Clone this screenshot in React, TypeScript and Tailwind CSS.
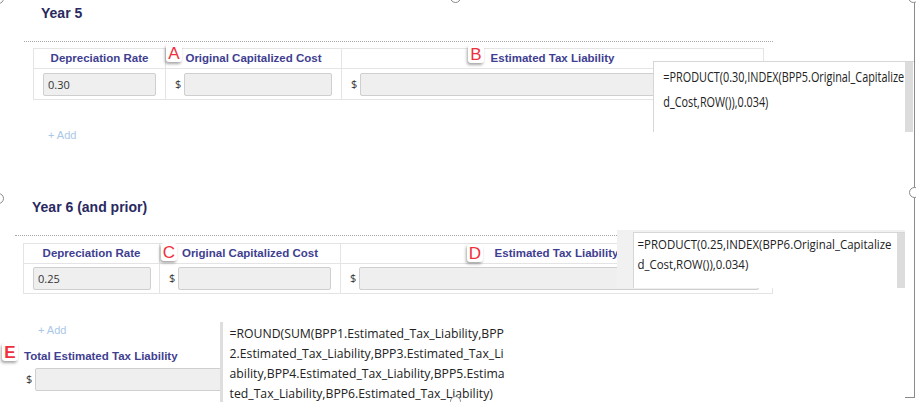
import React from 'react'

const Badge = ({ letter, className }: { letter: string; className: string }) => (
    <span className={`absolute flex h-[18px] w-[16px] items-center justify-center rounded-[3px] bg-white text-[17px] leading-none text-[#ef2f3b] shadow-[-1px_2px_3px_rgba(0,0,0,0.35)] ${className}`}>{letter}</span>
)

const Handle = ({ className }: { className: string }) => (
    <span className={`absolute h-[11px] w-[11px] rounded-full border border-[#8a8a8a] bg-white ${className}`} />
)

const Input = ({ value, className }: { value?: string; className: string }) => (
    <div className={`h-[23px] rounded-[2px] border border-[#cfcfcf] bg-[#efefef] pl-[4px] text-[11px] leading-[21px] text-[#333] font-['Open_Sans',sans-serif] ${className}`}>{value}</div>
)

const Dollar = () => <span className="mr-[3px] text-[11px] text-[#333] font-['Open_Sans',sans-serif]">$</span>

const Th = ({ children, className }: { children: React.ReactNode; className: string }) => (
    <div className={`flex h-[20px] items-center justify-center border-b border-[#e4e4e4] text-[11.5px] font-bold text-[#403e91] ${className}`}>{children}</div>
)

export default function App() {
    return (
        <div className="relative h-[402px] w-[916px] overflow-hidden bg-white font-['Liberation_Sans',Arial,sans-serif]">
            {/* Year 5 */}
            <h2 className="pl-[41px] pt-[5px] text-[14px] font-bold leading-[16px] text-[#29295f]">Year 5</h2>
            <div className="ml-[24px] mt-[20px] w-[749px] border-t border-dotted border-[#a9a9a9]" />
            <div className="relative ml-[33px] mt-[6px] w-[731px] border border-[#e4e4e4]">
                <div className="flex">
                    <Th className="w-[132px] border-r">Depreciation Rate</Th>
                    <Th className="w-[176px] border-r">Original Capitalized Cost</Th>
                    <Th className="flex-1">Estimated Tax Liability</Th>
                </div>
                <div className="flex h-[30px] items-center">
                    <div className="flex h-full w-[132px] items-center border-r border-[#e4e4e4] pl-[9px]">
                        <Input value="0.30" className="w-[113px]" />
                    </div>
                    <div className="flex h-full w-[176px] items-center border-r border-[#e4e4e4] pl-[9px]">
                        <Dollar />
                        <Input className="w-[148px]" />
                    </div>
                    <div className="flex h-full flex-1 items-center pl-[9px]">
                        <Dollar />
                        <Input className="w-[393px]" />
                    </div>
                </div>
                <Badge letter="A" className="left-[132px] top-[-5px]" />
                <Badge letter="B" className="left-[434px] top-[-4px]" />
            </div>
            <div className="ml-[48px] mt-[28px] text-[11px] leading-[14px] text-[#a9c8e8]">+ Add</div>

            {/* Year 6 */}
            <h2 className="pl-[32px] pt-[57px] text-[14px] font-bold leading-[16px] text-[#29295f]">Year 6 (and prior)</h2>
            <div className="ml-[15px] mt-[20px] w-[758px] border-t border-dotted border-[#a9a9a9]" />
            <div className="relative ml-[23px] mt-[7px] w-[750px] border border-[#e4e4e4]">
                <div className="flex">
                    <Th className="w-[136px] border-r">Depreciation Rate</Th>
                    <Th className="w-[181px] border-r">Original Capitalized Cost</Th>
                    <Th className="flex-1">Estimated Tax Liability</Th>
                </div>
                <div className="flex h-[29px] items-center">
                    <div className="flex h-full w-[136px] items-center border-r border-[#e4e4e4] pl-[9px]">
                        <Input value="0.25" className="w-[118px]" />
                    </div>
                    <div className="flex h-full w-[181px] items-center border-r border-[#e4e4e4] pl-[9px]">
                        <Dollar />
                        <Input className="w-[153px]" />
                    </div>
                    <div className="flex h-full flex-1 items-center pl-[9px]">
                        <Dollar />
                        <Input className="w-[400px]" />
                    </div>
                </div>
                <Badge letter="C" className="left-[137px] top-[-1px]" />
                <Badge letter="D" className="left-[443px] top-[0px]" />
            </div>
            <div className="ml-[38px] mt-[29px] text-[11px] leading-[14px] text-[#a9c8e8]">+ Add</div>

            <div className="relative ml-[24px] mt-[12px] text-[11.5px] font-bold leading-[14px] text-[#403e91]">
                Total Estimated Tax Liability
                <Badge letter="E" className="left-[-22px] top-[-6px]" />
            </div>
            <div className="ml-[26px] mt-[5px] flex items-center">
                <Dollar />
                <Input className="w-[260px]" />
            </div>

            {/* formula callouts */}
            <div className="absolute left-[653px] top-[61px] h-[71px] w-[261px] border-l border-t border-[#d6d6d6] bg-white">
                <div className="origin-left scale-x-[0.775] whitespace-nowrap pl-[12px] pt-[2px] text-[14px] leading-[25px] text-[#222] font-['Open_Sans',sans-serif]">
                    <div>=PRODUCT(0.30,INDEX(BPP5.Original_Capitalize</div>
                    <div>d_Cost,ROW()),0.034)</div>
                </div>
                <div className="absolute right-[1px] top-0 h-full w-[8px] bg-[#dcdcdc]" />
            </div>

            <div className="absolute left-[617px] top-[230px] h-[58px] w-[288px] bg-[#f1f1f1] pl-[16px] pt-[2px]">
                <div className="relative h-full w-[272px] border-l border-t border-[#d6d6d6] bg-white">
                    <div className="origin-left scale-x-[0.88] whitespace-nowrap pl-[4px] pt-[1px] text-[13px] leading-[20px] text-[#222] font-['Open_Sans',sans-serif]">
                        <div>=PRODUCT(0.25,INDEX(BPP6.Original_Capitalize</div>
                        <div>d_Cost,ROW()),0.034)</div>
                    </div>
                    <div className="absolute right-0 top-0 h-full w-[8px] bg-[#dcdcdc]" />
                </div>
            </div>

            <div className="absolute left-[220px] top-[322px] h-[80px] w-[300px] border-l-[3px] border-[#dedede] bg-white">
                <div className="origin-left scale-x-[0.94] whitespace-nowrap pl-[7px] pt-[1px] text-[13px] leading-[20px] text-[#222] font-['Open_Sans',sans-serif]">
                    <div>=ROUND(SUM(BPP1.Estimated_Tax_Liability,BPP</div>
                    <div>2.Estimated_Tax_Liability,BPP3.Estimated_Tax_Li</div>
                    <div>ability,BPP4.Estimated_Tax_Liability,BPP5.Estima</div>
                    <div>ted_Tax_Liability,BPP6.Estimated_Tax_Liability)</div>
                </div>
            </div>

            {/* selection frame */}
            <div className="absolute left-[914px] top-0 h-[397px] w-px bg-[#8a8a8a]" />
            <div className="absolute left-[905px] top-[397px] h-px w-[10px] bg-[#8a8a8a]" />
            <Handle className="left-[-7px] top-[-7px]" />
            <Handle className="left-[450px] top-[-8px]" />
            <Handle className="left-[908px] top-[-8px]" />
            <Handle className="left-[-7px] top-[193px]" />
            <Handle className="left-[909px] top-[187px]" />
            <Handle className="left-[450px] top-[396px]" />
        </div>
    )
}
